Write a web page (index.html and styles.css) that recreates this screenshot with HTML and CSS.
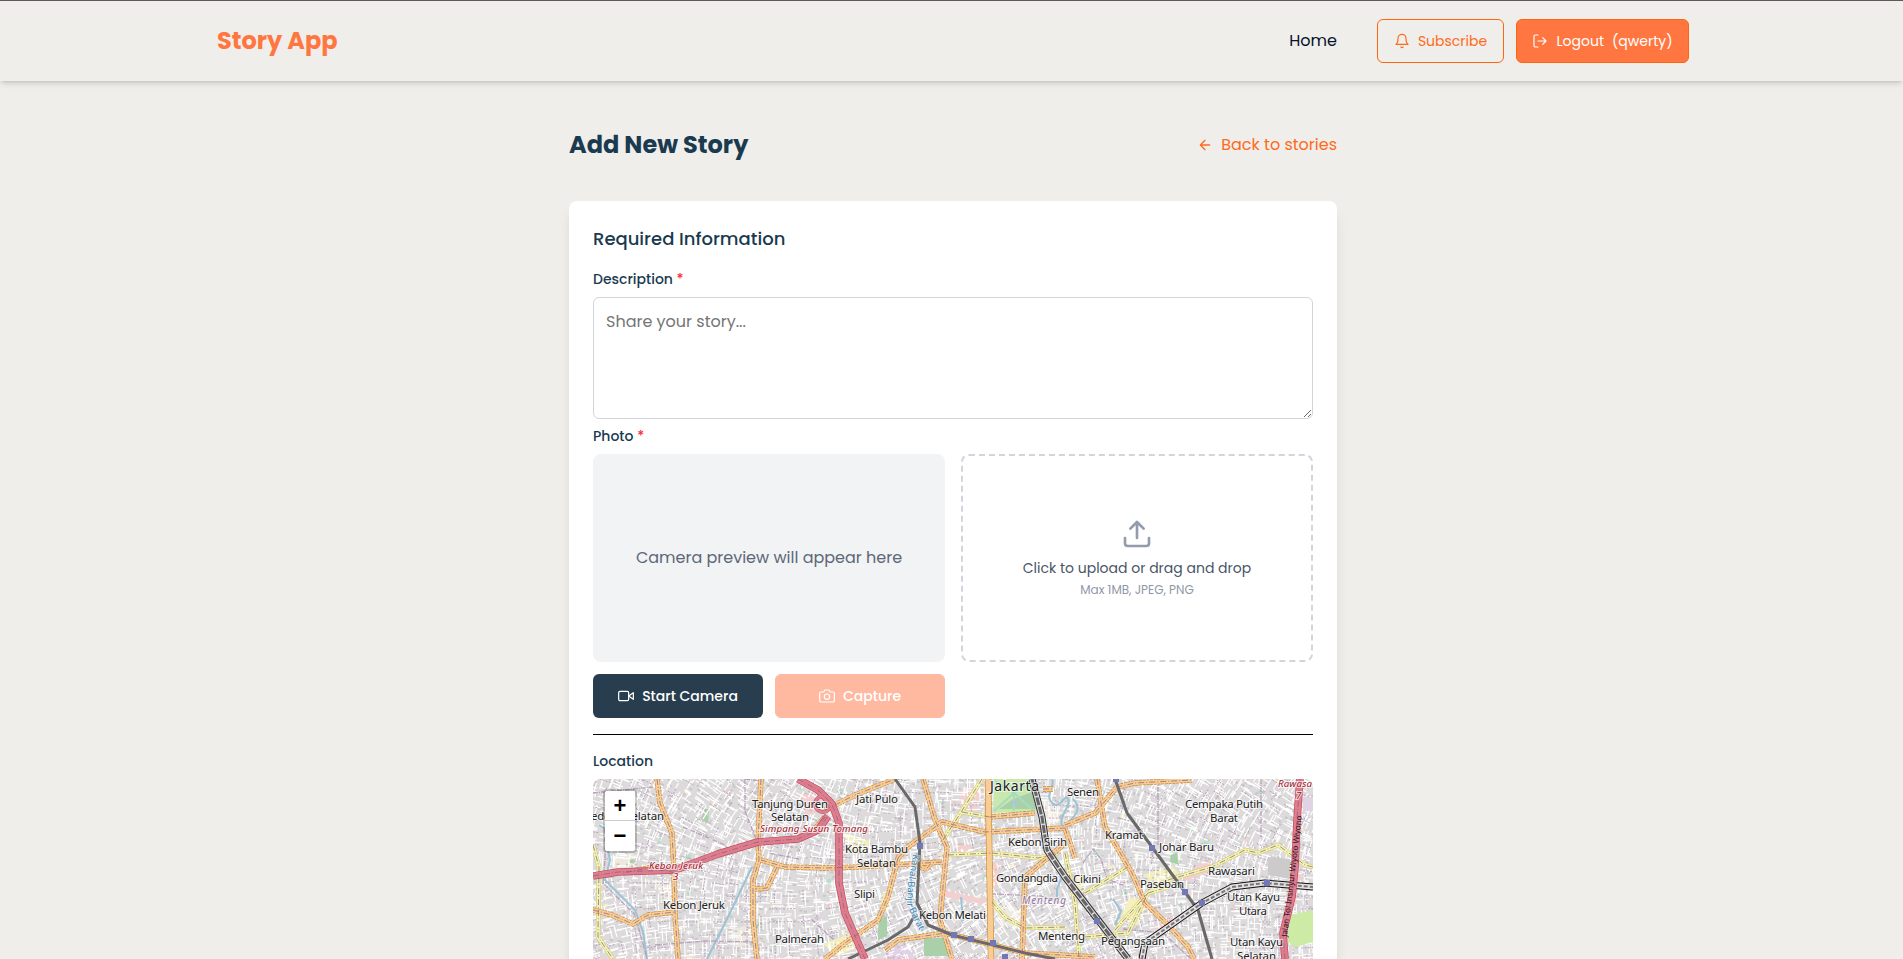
FILE: index.html
```html
<!DOCTYPE html>
<html lang="en">
<head>
<meta charset="utf-8">
<title>Story App</title>
<link rel="stylesheet" href="styles.css">
</head>
<body>
<header class="header">
  <div class="header-inner">
    <a class="brand">Story App</a>
    <nav class="nav">
      <a class="nav-link">Home</a>
      <div class="nav-actions">
        <button class="btn btn-outline">
          <svg class="icon" viewBox="0 0 24 24"><path d="M10.3 21a1.94 1.94 0 0 0 3.4 0M6 8a6 6 0 0 1 12 0c0 7 3 9 3 9H3s3-2 3-9"/></svg>
          <span>Subscribe</span>
        </button>
        <button class="btn btn-primary">
          <svg class="icon" viewBox="0 0 24 24"><path d="M9 21H5a2 2 0 0 1-2-2V5a2 2 0 0 1 2-2h4M16 17l5-5-5-5M21 12H9"/></svg>
          <span>Logout</span><span>(qwerty)</span>
        </button>
      </div>
    </nav>
  </div>
</header>
<main class="page">
  <div class="page-head">
    <h1 class="title">Add New Story</h1>
    <a class="back"><svg class="icon" viewBox="0 0 24 24"><path d="M12 19l-7-7 7-7M19 12H5"/></svg><span>Back to stories</span></a>
  </div>
  <form class="card">
    <h2 class="section-title">Required Information</h2>
    <label class="label label-desc">Description <span class="req">*</span></label>
    <textarea class="textarea" placeholder="Share your story..."></textarea>
    <label class="label label-photo">Photo <span class="req">*</span></label>
    <div class="photo-grid">
      <div class="camera">
        <div class="preview">Camera preview will appear here</div>
        <div class="camera-actions">
          <button type="button" class="btn btn-dark"><svg class="icon" viewBox="0 0 24 24"><path d="M23 7l-7 5 7 5z"/><rect x="1" y="5" width="15" height="14" rx="2"/></svg><span>Start Camera</span></button>
          <button type="button" class="btn btn-primary btn-disabled"><svg class="icon" viewBox="0 0 24 24"><path d="M23 19a2 2 0 0 1-2 2H3a2 2 0 0 1-2-2V8a2 2 0 0 1 2-2h4l2-3h6l2 3h4a2 2 0 0 1 2 2z"/><circle cx="12" cy="13" r="4"/></svg><span>Capture</span></button>
        </div>
      </div>
      <div class="upload">
        <svg class="upload-icon" viewBox="0 0 24 24"><path d="M21 15v4a2 2 0 0 1-2 2H5a2 2 0 0 1-2-2v-4M17 8l-5-5-5 5M12 3v12"/></svg>
        <p class="upload-text">Click to upload or drag and drop</p>
        <p class="upload-hint">Max 1MB, JPEG, PNG</p>
      </div>
    </div>
    <hr class="divider">
    <label class="label label-location">Location</label>
    <div class="map">
      <svg class="map-canvas" viewBox="0 0 720 256">
        <rect width="720" height="256" fill="#dddadb"/>
        <g class="areas">
          <path fill="#eee9df" d="M62 100l18 6v18l-12-4zM20 78l20-4 4 14-22 4zM140 150l24-6v20l-20 4zM400 118l30 14v20l-28-10zM440 22h20l12 20-18 4zM345 70l12-4v16h-12z"/>
          <path fill="#abd0aa" d="M112 30l4 0-1 14-8-2zM331 159h24l2 18h-26zM286 140l8-3v20l-9 4zM578 76l6-2 2 12-9-3zM160 145l10-3-8 10zM35 80l8 1-4 6z"/>
          <path fill="#f3d0d0" d="M350 110l42 10v6l-40-8zM584 98l28-16 8 2-6 10-26 10zM370 10l18-4-4 26-18-4zM395 84h12v24h-12zM560 148l18-12 6 8-18 10zM695 92l15 2-8 34h-6zM205 18l14-6 10 14-14 14zM362 64l16 2v8h-14z"/>
          <path fill="#f3efbd" d="M536 118l18 4-8 24-20-4zM550 96l28-10 8 8-24 14zM480 96l12 4-8 20zM252 54l24 8-2 12-20-4zM288 116l8-3 2 16-10 4zM230 165l26-10 8 14-20 8z"/>
          <path fill="#e2d3e6" d="M290 172l24-8 10 12-20 10zM470 100l-9 18 4-28z"/>
        </g>
        <g id="streets"></g>
        <g class="areas">
          <path fill="#c8e8ad" d="M401 0h40l8 32-49 2z"/>
          <path fill="#cdeca4" d="M697 136l23-5v32l-18 5-8-6z"/>
          <path fill="#abd0aa" d="M420 20l22-8 4 18h-40zM331 159h24l2 18h-26zM286 140l8-3v20l-9 4zM578 76l6-2 2 12-9-3z"/>
          <path fill="none" stroke="#a5dcc0" stroke-width="2" d="M421 14l-20 18M421 14L402 2M421 14l18-12M421 14l20 18M421 14v18"/>
          <path fill="#a9c8dc" d="M419 22h5v4h-5z"/>
          <path fill="#cccacb" d="M675 78l22 2v20l-22-4z"/><path fill="#e2d3e6" d="M710 18h10v14h-10z"/>
          <path fill="#f3d0d0" d="M350 111l40 9v5l-38-7zM590 96l22-12 8 1-6 9-22 8z"/>
          <path fill="#f5f0bf" d="M536 120l14 2-8 20-12-4z"/>
        </g>
        <g class="water"><path d="M6 46l10 6M12 58l5 23-5 20 30 30 8 22 4 27M159 88l-24 50-21 42M459 0c4 8-8 16 0 24s12-10 16-4-10 18-6 26M324 74l-6 24 0 26 12 28M480 20q8 8 2 16 l-8 10M472 90l-8 20 0 10M520 120l8 12-6 14M368 118l2 24"/></g>
        <g class="boundary"><path d="M152 0v32l10 26M152 0l16 2M12 50v30l-2 24 32 32 12 44M398 115l50 2 24 8M490 84l10-14 8 10 6 20 20 8M565 0v66M62 166l50-4 50 1M668 0v58M0 14l60-6M90 48l42 18M240 160l-22-20M530 150l40 4 28 26M206 80l-30-6"/></g>
        <g class="road yellow-case"><use href="#yellows"/></g>
        <g class="road yellow"><path id="yellows" d="M0 66l6 22-1 70 15 22M389 0l-24 38-15 23M369 33l28 5M355 76l44-2 46 5 20-5M399 123l13 15 20 11 40-1M555 111l20-10 44-13 33-17 13 3 20-8 27 20 8 2M472 74l10 50 4 56M492 114l43-26M522 151l33-37M492 158l43-4 20-40 20-6"/></g>
        <g class="road orange-case"><use href="#oranges"/></g>
        <g class="road orange"><path id="oranges" d="M64 0l3 24 12 30 2 37 1 43 3 46M168 0l-3 63 1 18-6 20v40l4 39M168 81l24 7 40 1 33-1 84-5M184 88l-10 21-12 1M0 131l19 5 21 9 15-9 27-3M82 94l-22-6-30 6M232 31l30-15 40-16M330 0l12 41 12 27-5 50-2 23 12 39M305 79l10-11 34-25 43 10 80-4M305 79l-10 39-10 23-33 23-20 16M397 38l45-4M470 66l-38 32-3 82M292 171l13-10 47-7 80 20 70 4M450 10h10M472 46l30-12 22-26 18-4 57-3M472 49l10 30M504 0l8 48 27 46 13 30 23 22 20 22 6 12M324 85q10 10 14-2M232 38l-12 14"/></g>
        <g class="road orange-wide-case"><path d="M395 0l2 118 1 62"/></g><g class="road orange-wide"><path d="M395 0l2 118 1 62"/></g>
        <g class="rail-case"><path d="M302 0l20 28 5 36-3 60 11 22 24 10 73 18 30 6M322 136l-7 12-20 13-40 19M522 0l12 34 25 34 33 45 13 18 14 49"/></g>
        <g class="rail-main-case"><path d="M439 0l10 38 5 33 18 27 20 26 43 56"/></g>
        <g class="rail-main"><path d="M439 0l10 38 5 33 18 27 20 26 43 56"/></g>
        <g class="rail-dash"><path d="M439 0l10 38 5 33 18 27 20 26 43 56"/></g>
        <g class="lrt-case"><path d="M549 180l3-16 23-16 34-24 30-16 33-4 48 4"/></g>
        <g class="lrt"><path d="M549 180l3-16 23-16 34-24 30-16 33-4 48 4"/></g>
        <g class="lrt-dash"><path d="M549 180l3-16 23-16 34-24 30-16 33-4 48 4"/></g>
        <g class="toll-case"><use href="#tolls"/><circle cx="230" cy="25" r="8"/></g>
        <g class="toll"><path id="tolls" d="M0 97l25-4 57-2 43-16 40-12 40-3 20-9 10-14M205 0l20 11 14 14 7 19v60l6 30 20 46M707 0l-3 41-2 47-3 30-9 36 2 26"/><circle cx="230" cy="25" r="8"/></g>
        <g class="center"><use href="#tolls"/><use href="#oranges"/><use href="#yellows"/></g>
        <g class="stations"><path d="M324 64h6v6h-6zM358 153h6v6h-6zM375 157h6v6h-6zM397 161h6v6h-6zM409 175h6v6h-6zM520 -3h6v6h-6zM556 66h6v6h-6zM589 110h6v6h-6zM606 121h6v6h-6zM671 101h6v6h-6zM501 139h6v6h-6z"/></g>
        <g class="place">
          <text x="-9" y="41" textLength="80">Kedoya Selatan</text>
          <text x="159" y="29" textLength="76">Tanjung Duren</text><text x="178" y="42" textLength="38">Selatan</text>
          <text x="263" y="24" textLength="42">Jati Pulo</text>
          <text x="252" y="74" textLength="63">Kota Bambu</text><text x="264" y="88" textLength="39">Selatan</text>
          <text x="261" y="119" textLength="21">Slipi</text><text x="70" y="130" textLength="62">Kebon Jeruk</text>
          <text x="182" y="164" textLength="49">Palmerah</text><text x="326" y="140" textLength="67">Kebon Melati</text>
          <text x="415" y="67" textLength="59">Kebon Sirih</text><text x="403" y="103" textLength="62">Gondangdia</text>
          <text x="445" y="161" textLength="47">Menteng</text><text x="474" y="17" textLength="32">Senen</text>
          <text x="512" y="60" textLength="38">Kramat</text><text x="480" y="104" textLength="28">Cikini</text>
          <text x="547" y="109" textLength="44">Paseban</text><text x="508" y="166" textLength="64">Pegangsaan</text>
          <text x="592" y="29" textLength="78">Cempaka Putih</text><text x="617" y="43" textLength="28">Barat</text>
          <text x="566" y="72" textLength="55">Johar Baru</text><text x="615" y="96" textLength="47">Rawasari</text>
          <text x="634" y="122" textLength="53">Utan Kayu</text><text x="646" y="136" textLength="28">Utara</text>
          <text x="637" y="167" textLength="53">Utan Kayu</text><text x="644" y="181" textLength="39">Selatan</text>
          <text class="city" x="397" y="12" textLength="49">Jakarta</text>
        </g>
        <g class="junction">
          <text x="56" y="90" textLength="54">Kebon Jeruk</text><text x="80" y="101">3</text>
          <text x="167" y="53" textLength="108">Simpang Susun Tomang</text>
          <text x="685" y="8" textLength="34">Rawasa</text><text x="703" y="20">7</text>
        </g>
        <text class="quarter" x="429" y="125" textLength="44">Menteng</text>
        <path id="canal" fill="none" d="M320 75l-5 30-1 22 16 32"/>
        <text class="canal-name"><textPath href="#canal">Kanal Banjir Barat</textPath></text>
        <text class="toll-name" transform="translate(694 158) rotate(-83)" textLength="122">Jalan Tol Insinyur Wiyoto Wiyono</text>
      </svg>
      <div class="zoom-control"><a class="zoom-btn">+</a><a class="zoom-btn zoom-out">−</a></div>
    </div>
  </form>
</main>
<script src="streets.js"></script>
</body>
</html>
```
FILE: styles.css
```css
* { box-sizing: border-box; margin: 0; padding: 0; }
html, body { height: 100%; overflow: hidden; }
body { background: #efeeea; font-family: Poppins, Inter, "Noto Sans", sans-serif; font-size: 16px; line-height: 24px; color: #1a3a4f; }
.icon { width: 16px; height: 16px; flex: none; fill: none; stroke: currentColor; stroke-width: 2; stroke-linecap: round; stroke-linejoin: round; }
span { white-space: nowrap; }
.header { height: 81px; padding-left: 3px; border-top: 1px solid #5f585c; background: #efeeea; box-shadow: 0 4px 6px -1px rgba(0,0,0,.1), 0 2px 4px -2px rgba(0,0,0,.18); }
.header-inner { width: 1472px; height: 80px; margin: 0 auto; display: flex; align-items: center; justify-content: space-between; }
.brand { font-size: 24px; font-weight: 700; line-height: 32px; color: #ff7640; }
.nav { display: flex; align-items: center; gap: 40px; }
.nav-link { color: #06142e; }
.nav-actions { display: flex; gap: 12px; }
.btn { height: 44px; padding: 0 16px; display: flex; align-items: center; justify-content: center; gap: 8px; border: 1px solid transparent; border-radius: 6px; font: inherit; font-size: 14px; line-height: 20px; color: #fff; }
.btn .icon { stroke-width: 1.8; }
.btn-outline { width: 127px; background: transparent; border-color: #ff640f; color: #ff6a20; }
.btn-primary { background: #ff7640; border-color: #ff640f; }
.nav-actions .btn-primary { width: 173px; }
.btn-dark { background: #283e4e; font-weight: 500; }
.btn-disabled { background: #ffb9a0; border-color: #ffb9a0; font-weight: 500; }
.page { width: 771px; margin: 0 auto; padding: 48px 0 0 3px; }
.page-head { height: 32px; display: flex; align-items: center; justify-content: space-between; margin-bottom: 40px; }
.title { font-size: 24px; line-height: 32px; font-weight: 700; }
.back { display: flex; align-items: center; gap: 8px; color: #ff6a20; }
.card { height: 960px; padding: 24px; border-radius: 8px; background: #fff; box-shadow: 0 10px 15px -3px rgba(0,0,0,.1), 0 4px 6px -4px rgba(0,0,0,.1); }
.section-title { font-size: 18px; line-height: 28px; font-weight: 500; margin-bottom: 16px; }
.label { display: block; font-size: 14px; line-height: 20px; font-weight: 500; }
.req { color: #fb2c36; }
.label-desc { margin-bottom: 8px; }
.textarea { display: block; width: 720px; height: 122px; padding: 12px; border: 1px solid #d1d5dc; border-radius: 6px; background: #fff; font: inherit; line-height: 24px; resize: vertical; }
.textarea::placeholder { color: #757575; }
.label-photo { margin: 7px 0 8px; }
.photo-grid { display: grid; grid-template-columns: 1fr 1fr; gap: 16px; }
.preview { height: 208px; border-radius: 8px; background: #f2f3f5; color: #5c6878; display: flex; align-items: center; justify-content: center; }
.camera-actions { margin-top: 12px; display: grid; grid-template-columns: 1fr 1fr; gap: 12px; }
.upload { height: 208px; border: 2px dashed #d1d5dc; border-radius: 8px; display: flex; flex-direction: column; align-items: center; justify-content: center; }
.upload-icon { width: 32px; height: 32px; fill: none; stroke: #939bac; stroke-width: 2; stroke-linecap: round; stroke-linejoin: round; margin-bottom: 8px; }
.upload-text { font-size: 14px; line-height: 20px; color: #4a5568; margin-bottom: 4px; }
.upload-hint { font-size: 12px; line-height: 16px; color: #8f98a8; }
.divider { border: 0; border-top: 1px solid #000; margin: 16px 0; }
.label-location { margin-bottom: 8px; }
.map { position: relative; width: 720px; height: 256px; border-radius: 8px; overflow: hidden; }
.map-canvas { display: block; width: 720px; height: 256px; font-family: "Noto Sans", sans-serif; }
.zoom-control { position: absolute; left: 10px; top: 10px; width: 34px; border: 2px solid rgba(0,0,0,.2); border-radius: 4px; background-clip: padding-box; }
.zoom-btn { display: block; height: 30px; background: #fff; border-bottom: 1px solid #ccc; font: bold 22px/30px "Liberation Sans", sans-serif; text-align: center; color: #000; border-radius: 2px 2px 0 0; }
.zoom-out { border-bottom: 0; border-radius: 0 0 2px 2px; }

.road, .water, .boundary, .rail-case, .rail-main-case, .rail-main, .rail-dash, .lrt-case, .lrt, .lrt-dash, .toll-case, .toll, .center { fill: none; stroke-linejoin: round; }
.water { stroke: #9cc4d6; stroke-width: 2; }
.boundary { stroke: #ac91b2; stroke-width: 1.3; stroke-dasharray: 5 1 1 1; opacity: .8; }
.yellow-case { stroke: #c9c878; stroke-width: 4.6; }
.yellow { stroke: #f4f3af; stroke-width: 3.6; }
.orange-case { stroke: #c38835; stroke-width: 5.4; stroke-dasharray: 3 .7; }
.orange { stroke: #f9cd92; stroke-width: 4.2; }
.orange-wide-case { stroke: #c38835; stroke-width: 6.4; }
.orange-wide { stroke: #f9cd92; stroke-width: 5.2; }
.rail-case { stroke: #696969; stroke-width: 3; }
.rail-main-case { stroke: #333; stroke-width: 7; }
.rail-main { stroke: #ddd; stroke-width: 5; }
.rail-dash { stroke: #666; stroke-width: 3; stroke-dasharray: 8 1.5; }
.lrt-case { stroke: #111; stroke-width: 7; }
.lrt { stroke: #e4e0e2; stroke-width: 5; }
.lrt-dash { stroke: #777; stroke-width: 2; stroke-dasharray: 4 2; }
.toll-case { stroke: #bf5064; stroke-width: 7.6; }
.toll { stroke: #e07d8d; stroke-width: 6.2; }
.toll-case circle { stroke-width: 4; }
.toll circle { stroke-width: 2.8; }
.center { stroke: #84608c; stroke-width: .9; stroke-dasharray: 6 2 1 2; opacity: .8; }
.stations { fill: #7277b5; }
.place { font-size: 11.5px; fill: #222; stroke: rgba(255,255,255,.65); stroke-width: 2px; paint-order: stroke; }
.city { font-size: 14px; }
.junction { font-size: 9.8px; font-style: italic; fill: #a01423; stroke: rgba(255,255,255,.7); stroke-width: 2px; paint-order: stroke; }
.quarter { font-size: 10px; font-style: italic; fill: #93749b; stroke: rgba(255,255,255,.7); stroke-width: 2px; paint-order: stroke; }
.canal-name { font-size: 9.5px; fill: #3c83b2; stroke: rgba(255,255,255,.6); stroke-width: 1.5px; paint-order: stroke; }
.toll-name { font-size: 8px; fill: #2d1118; }
```
FILE: streets.js
```js
// Fills the map with a repeatable mesh of minor streets, buildings and footpaths.
let seed = 41;
const rnd = () => (seed = (seed * 16807) % 2147483647) / 2147483647;
let streets = "", blocks = "", paths = "";
const patches = [["#f6f0c0", ""], ["#efe7d8", ""], ["#aee3c4", ""], ["#f1c9c9", ""]];
for (let y = -6; y < 190; y += 13) {
  for (let x = -6; x < 726; x += 14) {
    const a = (Math.sin(x / 83) + Math.cos(y / 47)) * 0.3;
    const c = Math.cos(a), s = Math.sin(a);
    const pt = (u, v) => (x + u * c - v * s).toFixed(1) + " " + (y + u * s + v * c).toFixed(1);
    for (let k = 0; k < 6; k++) {
      const o = rnd() * 14, b = rnd() * 5, e = 6 + rnd() * 11;
      streets += rnd() < 0.5 ? `M${pt(b, o)}L${pt(e, o)}` : `M${pt(o, b)}L${pt(o, e)}`;
    }
    for (let k = 0; k < 3; k++) {
      const u = rnd() * 12, v = rnd() * 12;
      blocks += `M${pt(u, v)}L${pt(u + 3, v)}`;
    }
    if (rnd() < 0.4) paths += `M${pt(0, 6)}L${pt(13, 6)}`;
    if (rnd() < 0.3) paths += `M${pt(6, 0)}L${pt(6, 13)}`;
    if (rnd() < 0.16) {
      const p = patches[Math.floor(rnd() * 4)];
      p[1] += `M${pt(2, 2)}L${pt(4 + rnd() * 4, 2)}L${pt(6, 6)}L${pt(2, 5)}Z`;
    }
  }
}
document.getElementById("streets").innerHTML =
  patches.map(p => `<path fill="${p[1] ? p[0] : "none"}" d="${p[1]}"/>`).join("") +
  `<path d="${blocks}" stroke="#c8c3c6" stroke-width="1.6"/>` +
  `<path d="${streets}" stroke="#fff" stroke-width="1.15" fill="none"/>` +
  `<path d="${paths}" stroke="#b49cb9" stroke-width=".9" stroke-dasharray="2 1.4" fill="none"/>`;
```
